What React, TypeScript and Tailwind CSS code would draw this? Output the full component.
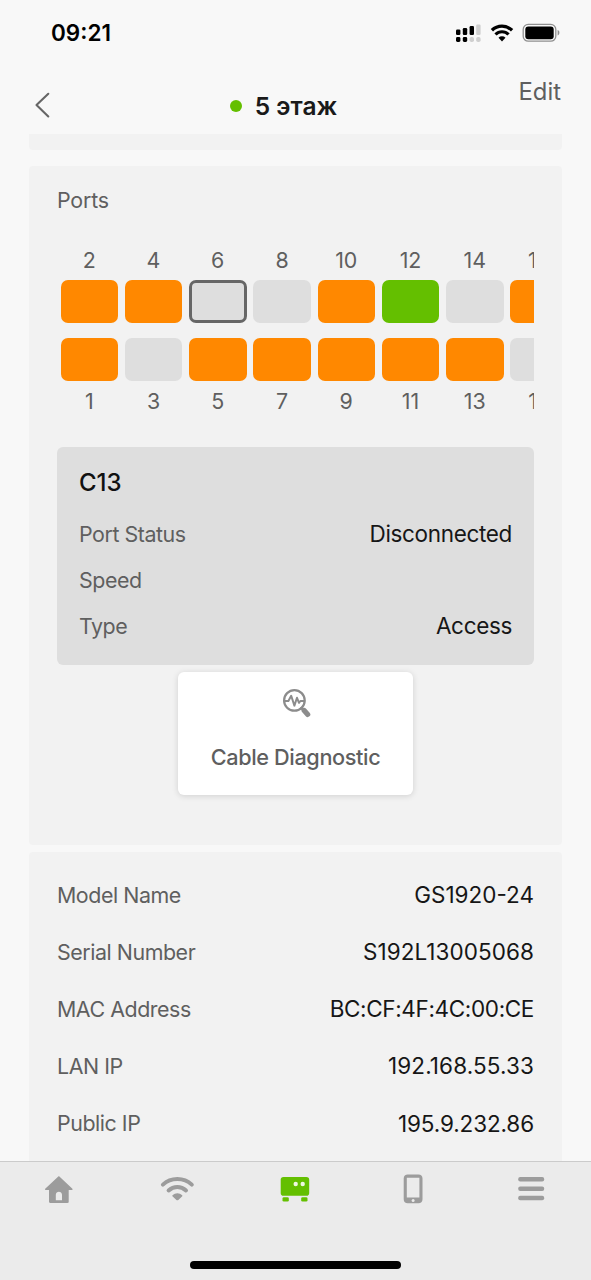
import React, { useState } from 'react';

type PortState = 'poe' | 'link' | 'off';

interface Port {
  id: number;
  state: PortState;
}

const portPairs: { top: Port; bottom: Port }[] = [
  { top: { id: 2, state: 'poe' }, bottom: { id: 1, state: 'poe' } },
  { top: { id: 4, state: 'poe' }, bottom: { id: 3, state: 'off' } },
  { top: { id: 6, state: 'off' }, bottom: { id: 5, state: 'poe' } },
  { top: { id: 8, state: 'off' }, bottom: { id: 7, state: 'poe' } },
  { top: { id: 10, state: 'poe' }, bottom: { id: 9, state: 'poe' } },
  { top: { id: 12, state: 'link' }, bottom: { id: 11, state: 'poe' } },
  { top: { id: 14, state: 'off' }, bottom: { id: 13, state: 'poe' } },
  { top: { id: 16, state: 'poe' }, bottom: { id: 15, state: 'off' } },
];

const portColors: Record<PortState, string> = {
  poe: 'bg-[#ff8800]',
  link: 'bg-[#64bf00]',
  off: 'bg-[#dedede]',
};

const deviceInfo = [
  { label: 'Model Name', value: 'GS1920-24', tracking: 'tracking-normal' },
  { label: 'Serial Number', value: 'S192L13005068', tracking: 'tracking-[0.06px]' },
  { label: 'MAC Address', value: 'BC:CF:4F:4C:00:CE', tracking: 'tracking-[-0.36px]' },
  { label: 'LAN IP', value: '192.168.55.33', tracking: 'tracking-[0.12px]' },
  { label: 'Public IP', value: '195.9.232.86', tracking: 'tracking-[-0.12px]' },
];

const StatusBar: React.FC = () => (
  <div className="flex h-16 shrink-0 items-center justify-between pl-[51px] pr-[31px] pt-px">
    <span className="text-[22.5px] leading-8 font-semibold text-black">09:21</span>
    <div className="flex items-center">
      <svg width="26" height="20" viewBox="0 0 26 20">
        <g fill="#000">
          <rect x="1" y="6.5" width="4.4" height="5.5" rx="1.2" />
          <rect x="7.8" y="5" width="4.4" height="7" rx="1.2" />
          <rect x="14.6" y="3" width="4.4" height="9" rx="1.2" />
          <rect x="1" y="14" width="4.4" height="5" rx="1.4" />
          <rect x="7.8" y="14" width="4.4" height="5" rx="1.4" />
        </g>
        <g fill="#cfcfcf">
          <rect x="21.2" y="1.5" width="4.4" height="10.5" rx="1.2" />
          <rect x="14.6" y="14" width="4.4" height="5" rx="1.8" />
          <rect x="21.2" y="14" width="4.4" height="5" rx="1.8" />
        </g>
      </svg>
      <svg className="ml-[9px]" width="24" height="20" viewBox="0 0 24 20" fill="none" stroke="#000">
        <path d="M1.9 7.3a14.5 14.5 0 0 1 20.2 0" strokeWidth="3.3" />
        <path d="M5.5 11.5a9.2 9.2 0 0 1 13 0" strokeWidth="3.1" />
        <path d="M8.5 14.8a5 5 0 0 1 7 0L12 18.4z" fill="#000" stroke="none" />
      </svg>
      <svg className="ml-[8px]" width="38" height="20" viewBox="0 0 38 20">
        <rect x="1.2" y="1.4" width="32.6" height="16.8" rx="5" fill="none" stroke="#8f8f8f" strokeWidth="1.3" />
        <rect x="3.3" y="3.6" width="28.4" height="12.6" rx="3" fill="#000" />
        <path d="M35.6 7.1c1.3.5 1.8 1.5 1.8 2.700s-.5 2.200-1.800 2.700z" fill="#8f8f8f" />
      </svg>
    </div>
  </div>
);

const Header: React.FC = () => (
  <header className="flex h-[70px] shrink-0 items-start justify-between pl-[34px] pr-[30px]">
    <button className="mt-7 w-[42px]" aria-label="Back">
      <svg width="16" height="26" viewBox="0 0 16 26" fill="none" stroke="#666" strokeWidth="2.1">
        <path d="M14.3 1.8 2.5 13l11.800 11.400" strokeLinecap="round" strokeLinejoin="round" />
      </svg>
    </button>
    <h1 className="mt-[26px] flex items-center gap-[13px] text-[24.5px] leading-8 font-semibold text-[#1a1a1a]">
      <span className="h-[12px] w-[12px] rounded-full bg-[#64bf00]" />
      5 этаж
    </h1>
    <button className="mt-3 w-[70px] text-right text-[23.8px] leading-8 text-[#5f5f5f]">Edit</button>
  </header>
);

interface PortButtonProps {
  port: Port;
  selected: boolean;
  onSelect: (id: number) => void;
}

const PortButton: React.FC<PortButtonProps> = ({ port, selected, onSelect }) => (
  <button
    onClick={() => onSelect(port.id)}
    aria-label={`Port ${port.id}`}
    className={`block h-[43px] w-[57.5px] rounded-[7px] ${portColors[port.state]} ${
      selected ? 'border-[3px] border-[#666]' : ''
    }`}
  />
);

const PortGrid: React.FC = () => {
  const [selected, setSelected] = useState<number>(6);

  return (
    <div className="mt-[28px] flex gap-[6.75px] overflow-hidden pl-[3.5px]">
      {portPairs.map(({ top, bottom }) => (
        <div key={top.id} className="w-[57.5px] shrink-0 text-center text-[21.4px] leading-8 text-[#5f5f5f]">
          <div>{top.id}</div>
          <div className="mt-[4px]">
            <PortButton port={top} selected={selected === top.id} onSelect={setSelected} />
          </div>
          <div className="mt-[15px]">
            <PortButton port={bottom} selected={selected === bottom.id} onSelect={setSelected} />
          </div>
          <div className="mt-[4.5px]">{bottom.id}</div>
        </div>
      ))}
    </div>
  );
};

interface InfoRowProps {
  label: string;
  value?: string;
  tracking?: string;
  className: string;
}

const InfoRow: React.FC<InfoRowProps> = ({ label, value, tracking = 'tracking-[-0.34px]', className }) => (
  <div className={`flex items-center justify-between ${className}`}>
    <span className="text-[21.4px] tracking-[-0.45px] text-[#5f5f5f]">{label}</span>
    <span className={`text-[22.5px] text-[#161616] ${tracking}`}>{value}</span>
  </div>
);

const DiagnosticIcon: React.FC = () => (
  <svg
    className="ml-[2px]"
    width="30"
    height="30"
    viewBox="0 0 30 30"
    fill="none"
    stroke="#8c8c8c"
    strokeLinecap="round"
    strokeLinejoin="round"
  >
    <circle cx="12.4" cy="12.4" r="10.300" strokeWidth="2.200" />
    <path d="M2.200 13h4.200L9.200 7.800l3.200 9.800 2.600-7.800 2 5 1.400-1.800h4" strokeWidth="2" />
    <path d="m19.600 20 1.600 1.600" strokeWidth="3" />
    <path d="m22.200 22.500 3.500 3.900" strokeWidth="5.200" />
  </svg>
);

const PortsCard: React.FC = () => (
  <section className="mt-[15.5px] h-[679.5px] shrink-0 rounded-[4px] bg-[#f2f2f2] px-7 pt-[18px]">
    <h2 className="text-[21.4px] leading-8 tracking-[-0.2px] text-[#5f5f5f]">Ports</h2>
    <PortGrid />
    <div className="mt-[29.5px] h-[218.5px] rounded-[6px] bg-[#dedede] px-[22px] pt-5">
      <h3 className="mb-[13px] text-[24px] leading-8 font-medium text-[#111]">C13</h3>
      <InfoRow label="Port Status" value="Disconnected" className="h-[45.7px]" />
      <InfoRow label="Speed" className="h-[45.7px]" />
      <InfoRow label="Type" value="Access" className="h-[45.7px]" />
    </div>
    <button className="mx-auto mt-[7px] flex h-[123px] w-[235px] flex-col items-center rounded-[6px] bg-white pt-4 shadow-[0_1px_6px_rgba(0,0,0,0.14)]">
      <DiagnosticIcon />
      <span className="mt-[23px] text-[21.7px] leading-8 font-medium tracking-[-0.38px] text-[#5f5f5f]">
        Cable Diagnostic
      </span>
    </button>
  </section>
);

const TabBar: React.FC = () => (
  <nav className="relative grid h-[119px] shrink-0 grid-cols-5 justify-items-center border-t border-[#cbcbcb] bg-[#ebebeb] pt-[11px] text-[#9c9c9c]">
    <svg width="34" height="34" viewBox="0 0 34 34" fill="currentColor">
      <path
        fillRule="evenodd"
        d="M16.3 3.4c.3-.3.800-.3 1.100 0L30.400 15.700c.5.600.3 1.200-.5 1.200h-3.200v11.800c0 .8-.4 1.200-1.200 1.200H8.200c-.8 0-1.200-.4-1.200-1.200V16.900H3.700c-.8 0-1-.6-.5-1.200zM13.800 27.200h6.200v-5.400c0-4.200-6.200-4.200-6.200 0z"
      />
    </svg>
    <svg width="36" height="34" viewBox="0 0 36 34" fill="none" stroke="currentColor" strokeLinecap="round">
      <path d="M3.900 11.600c8-7.400 20.900-7.400 28.900 0" strokeWidth="4" />
      <path d="M9.600 17.500c5-4.700 12.400-4.700 17.400 0" strokeWidth="4" />
      <path
        d="M13.500 22.200c2.800-2.700 6.900-2.700 9.700 0 .4.500.3 1-.2 1.400l-3.700 3.300c-.6.500-1.300.500-1.900 0l-3.700-3.300c-.5-.4-.6-.9-.2-1.400z"
        fill="currentColor"
        stroke="none"
      />
    </svg>
    <svg width="34" height="34" viewBox="0 0 34 34" fill="#64bf00">
      <rect x="2.700" y="4" width="28.500" height="18.700" rx="2.800" />
      <rect x="4.500" y="24.200" width="6.300" height="4.300" rx="1.300" />
      <rect x="23.200" y="24.200" width="6.300" height="4.300" rx="1.300" />
      <circle cx="17.700" cy="11" r="2.200" fill="#eef8e0" />
      <circle cx="24.700" cy="11" r="2.200" fill="#eef8e0" />
    </svg>
    <svg className="-ml-px" width="34" height="34" viewBox="0 0 34 34">
      <path
        fill="currentColor"
        fillRule="evenodd"
        d="M11.700 1.500h10.800c2.400 0 4 1.600 4 4v20.800c0 2.400-1.600 4-4 4H11.700c-2.400 0-4-1.600-4-4V5.500c0-2.400 1.600-4 4-4zM10.800 4.800v19.700h12.600V4.800z"
      />
      <circle cx="17.100" cy="27.400" r="1.500" fill="#ebebeb" />
    </svg>
    <svg className="-ml-px" width="34" height="34" viewBox="0 0 34 34" fill="currentColor">
      <rect x="4.200" y="4" width="26" height="4.500" rx="2" />
      <rect x="4.200" y="13.400" width="26" height="4.500" rx="2" />
      <rect x="4.200" y="22.800" width="26" height="4.500" rx="2" />
    </svg>
    {/* home indicator */}
    <div className="absolute bottom-[11px] left-[190px] h-[8px] w-[211px] rounded-full bg-black" />
  </nav>
);

const App: React.FC = () => {
  return (
    <div className="flex h-[1280px] w-[591px] flex-col overflow-hidden bg-[#f8f8f8] font-['Inter','Noto_Sans',sans-serif]">
      <StatusBar />
      <Header />
      <main className="flex min-h-0 flex-1 flex-col overflow-hidden px-[29px]">
        <div className="h-4 shrink-0 rounded-b-[4px] bg-[#f2f2f2]" />
        <PortsCard />
        <section className="mt-[7px] shrink-0 rounded-[4px] bg-[#f2f2f2] px-7 pb-7 pt-[14.5px]">
          {deviceInfo.map((item) => (
            <InfoRow
              key={item.label}
              label={item.label}
              value={item.value}
              tracking={item.tracking}
              className="h-[57.1px]"
            />
          ))}
        </section>
      </main>
      <TabBar />
    </div>
  );
};

export default App;
